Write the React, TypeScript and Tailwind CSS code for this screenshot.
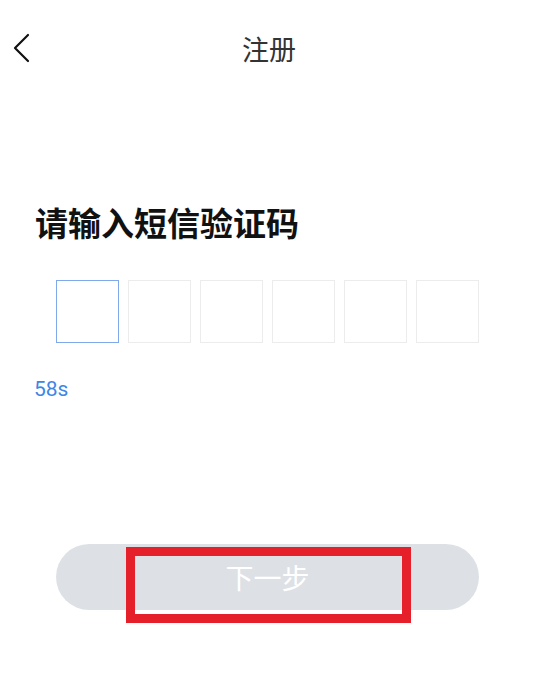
import React from "react";

export default function App() {
  const boxes = [0, 1, 2, 3, 4, 5];
  return (
    <div
      className="w-[538px] h-[678px] bg-white overflow-hidden"
      style={{ fontFamily: '"Noto Sans CJK SC", "Noto Sans", sans-serif' }}
    >
      <header className="h-[96px] grid grid-cols-[1fr_auto_1fr] items-center">
        <div className="pl-[13px] flex items-center">
          <svg width="18" height="30" viewBox="0 0 18 30" fill="none">
            <path d="M15 2 L2 15 L15 28" stroke="#111" strokeWidth="2.2" strokeLinecap="round" strokeLinejoin="round" />
          </svg>
        </div>
        <h1 className="text-[27px] leading-none text-[#333] font-normal">注册</h1>
        <div />
      </header>

      <div className="pl-[35px] pr-[35px]">
        <h2 className="mt-[110px] text-[33px] leading-[33px] font-bold text-[#111]">请输入短信验证码</h2>

        <div className="mt-[41px] ml-[21px] flex gap-[9px]">
          {boxes.map((i) => (
            <div
              key={i}
              className={
                i === 0
                  ? "w-[63px] h-[63px] border border-[#7fa9ea]"
                  : "w-[63px] h-[63px] border border-[#ececec]"
              }
            />
          ))}
        </div>

        <div
          className="mt-[36px] -ml-[1px] text-[21px] leading-none text-[#3d86e6]"
          style={{ fontFamily: 'Roboto, "Noto Sans", sans-serif' }}
        >
          58s
        </div>
      </div>

      <div className="mt-[144px] ml-[56px] relative w-[423px] h-[66px]">
        <button className="w-full h-full rounded-full bg-[#dde1e6] text-white text-[28px] leading-none flex items-center justify-center">
          下一步
        </button>
        <div className="absolute left-[70px] top-[3px] w-[285px] h-[76px] border-[9px] border-[#e5202a] pointer-events-none" />
      </div>
    </div>
  );
}
